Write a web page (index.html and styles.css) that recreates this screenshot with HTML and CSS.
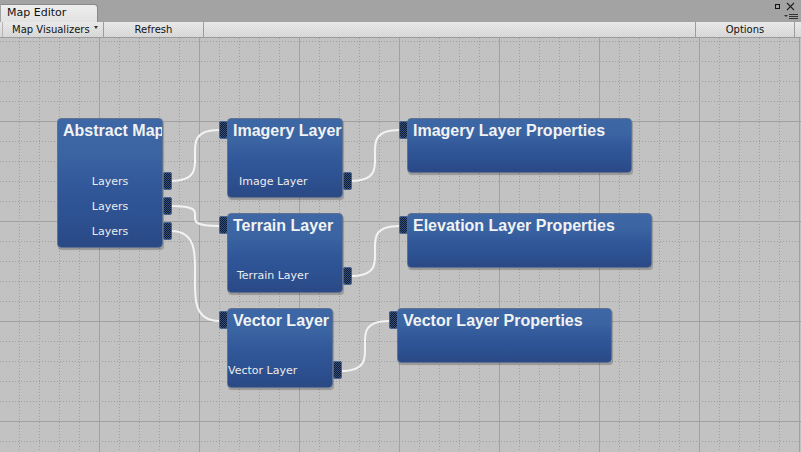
FILE: index.html
```html
<!DOCTYPE html>
<html lang="en">
<head>
<meta charset="utf-8">
<title>Map Editor</title>
<link rel="stylesheet" href="styles.css">
</head>
<body>
<div class="window">
  <div class="tabbar">
    <div class="tab">Map Editor</div>
    <svg class="win-icons" width="28" height="22" viewBox="0 0 28 22">
      <rect x="2.5" y="4.5" width="4" height="4" fill="none" stroke="#111" stroke-width="1"/>
      <path d="M14 3 L21 10 M21 3 L14 10" stroke="#222" stroke-width="1.1" fill="none"/>
      <path d="M11 15 L15 15 L13 17 Z" fill="#333"/>
      <path d="M16 14.5 H25 M16 16.5 H25 M16 18.5 H25" stroke="#333" stroke-width="1"/>
    </svg>
  </div>
  <div class="toolbar">
    <div class="tb-btn tb-drop">Map Visualizers<span class="caret"></span></div>
    <div class="tb-btn tb-refresh">Refresh</div>
    <div class="tb-spacer"></div>
    <div class="tb-btn tb-options">Options</div>
  </div>
  <div class="canvas">
    <svg class="wires" width="801" height="414" viewBox="0 0 801 414">
      <path d="M171 143 C221 143 169 92 219 92"/>
      <path d="M171 168 C221 168 169 188 219 188"/>
      <path d="M171 193 C221 193 169 283 219 283"/>
      <path d="M351 143 C401 143 349 92 399 92"/>
      <path d="M351 238 C401 238 349 188 399 188"/>
      <path d="M341 333 C391 333 339 283 389 283"/>
    </svg>

    <div class="node n-abstract">
      <div class="node-title">Abstract Map</div>
      <div class="node-fields fields-center">
        <div class="field">Layers</div>
        <div class="field">Layers</div>
        <div class="field">Layers</div>
      </div>
      <span class="port out p1"></span>
      <span class="port out p2"></span>
      <span class="port out p3"></span>
    </div>

    <div class="node n-imagery">
      <div class="node-title">Imagery Layer</div>
      <div class="node-fields fields-imagery"><div class="field">Image Layer</div></div>
      <span class="port in"></span>
      <span class="port out p1"></span>
    </div>

    <div class="node n-terrain">
      <div class="node-title">Terrain Layer</div>
      <div class="node-fields fields-terrain"><div class="field">Terrain Layer</div></div>
      <span class="port in"></span>
      <span class="port out p1"></span>
    </div>

    <div class="node n-vector">
      <div class="node-title">Vector Layer</div>
      <div class="node-fields fields-vector"><div class="field">Vector Layer</div></div>
      <span class="port in"></span>
      <span class="port out p1v"></span>
    </div>

    <div class="node prop n-imgprops">
      <div class="node-title">Imagery Layer Properties</div>
      <span class="port in"></span>
    </div>

    <div class="node prop n-elevprops">
      <div class="node-title">Elevation Layer Properties</div>
      <span class="port in"></span>
    </div>

    <div class="node prop n-vecprops">
      <div class="node-title">Vector Layer Properties</div>
      <span class="port in"></span>
    </div>
  </div>
</div>
</body>
</html>
```

FILE: styles.css
```css
* { box-sizing: border-box; }
html, body { margin: 0; padding: 0; }
body {
  font-family: "DejaVu Sans", Verdana, sans-serif;
  background: #c2c2c2;
}
.window {
  width: 801px;
  height: 452px;
  display: flex;
  flex-direction: column;
  overflow: hidden;
  background: #c2c2c2;
}

/* ---------- tab bar ---------- */
.tabbar {
  flex: none;
  height: 22px;
  background: #a3a3a3;
  display: flex;
  align-items: flex-end;
}
.tab {
  height: 18px;
  width: 98px;
  padding-left: 6px;
  background: linear-gradient(#eeeeee, #e2e2e2);
  border: 1px solid #8a8a8a;
  border-bottom: none;
  border-left-color: #a3a3a3;
  border-radius: 0 4px 0 0;
  font-size: 11px;
  line-height: 16px;
  color: #111;
}
.win-icons {
  margin-left: auto;
  align-self: flex-start;
  flex: none;
}

/* ---------- toolbar ---------- */
.toolbar {
  flex: none;
  height: 16px;
  display: flex;
  background:
    repeating-conic-gradient(rgba(0,0,0,0.04) 0 25%, rgba(255,255,255,0.05) 0 50%) 0 0 / 2px 2px,
    linear-gradient(#ededed, #dadada);
  border-bottom: 1px solid #9c9c9c;
  font-size: 10px;
  color: #111;
}
.tb-btn {
  height: 100%;
  display: flex;
  align-items: center;
  border-right: 1px solid #9c9c9c;
  white-space: nowrap;
  padding-bottom: 1px;
}
.tb-drop {
  width: 102px;
  margin-left: 2px;
  padding-left: 9px;
  border-left: 1px solid #b5b5b5;
}
.caret {
  display: inline-block;
  margin-left: 4px;
  margin-top: -3px;
  border-left: 2.5px solid transparent;
  border-right: 2.5px solid transparent;
  border-top: 3px solid #333;
}
.tb-refresh {
  width: 100px;
  justify-content: center;
}
.tb-spacer { flex: 1; border-right: 1px solid #9c9c9c; }
.tb-options {
  width: 99px;
  justify-content: center;
  margin-right: 6px;
}

/* ---------- canvas ---------- */
.canvas {
  flex: 1;
  position: relative;
  background-color: #c2c2c2;
  background-image:
    linear-gradient(90deg, #a1a1a1 1px, transparent 1px),
    linear-gradient(#a1a1a1 1px, transparent 1px),
    conic-gradient(at 1px 1px, transparent 75%, #9e9e9e 0),
    conic-gradient(at 1px 1px, transparent 75%, #9e9e9e 0);
  background-size: 100px 100%, 100% 100px, 20px 3px, 3px 20px;
  background-position: 99px 0, 0 83px, 19px 0, 0 3px;
}
.wires {
  position: absolute;
  left: 0;
  top: 0;
  pointer-events: none;
}
.wires path {
  fill: none;
  stroke: #f3f3f3;
  stroke-width: 2;
}

/* ---------- nodes ---------- */
.node {
  position: absolute;
  border-radius: 4px;
  border: 1px solid #60728f;
  background: linear-gradient(180deg, #3d67a5 0%, #3b64a2 28%, #31589a 52%, #2d5191 76%, #2a4985 100%);
  box-shadow: 1px 2px 1px rgba(0, 0, 0, 0.22);
  color: #f2f2f2;
}
.node-title {
  font: bold 16px/20px "Liberation Sans", Arial, sans-serif;
  padding: 2px 0 0 5px;
  white-space: nowrap;
  overflow: hidden;
}
.node-fields {
  display: flex;
  flex-direction: column;
  gap: 11px;
  margin-top: 34px;
  font-size: 11px;
  line-height: 14px;
  color: #ececec;
  white-space: nowrap;
}
.fields-center { text-align: center; }
.fields-imagery { padding-left: 11px; }
.fields-terrain { padding-left: 9px; margin-top: 33px; }
.fields-vector { padding-left: 0; margin-top: 33px; }

.n-abstract { left: 57px; top: 80px; width: 106px; height: 130px; }
.n-imagery  { left: 227px; top: 80px; width: 116px; height: 80px; }
.n-terrain  { left: 227px; top: 175px; width: 116px; height: 80px; }
.n-vector   { left: 227px; top: 270px; width: 106px; height: 80px; }
.n-imgprops { left: 407px; top: 80px; width: 225px; height: 55px; }
.n-elevprops{ left: 407px; top: 175px; width: 245px; height: 55px; }
.n-vecprops { left: 397px; top: 270px; width: 215px; height: 55px; }

/* ---------- ports ---------- */
.port {
  position: absolute;
  width: 9px;
  height: 18px;
  border-radius: 3px;
  background: repeating-conic-gradient(#101a30 0 25%, #34507e 0 50%) 0 0 / 2px 2px;
  box-shadow: inset 0 0 0 1px #4a6796;
}
.port.in { left: -9px; top: 2px; }
.port.out { right: -10px; }
.port.p1 { top: 53px; }
.port.p2 { top: 78px; }
.port.p3 { top: 103px; }
.port.p1v { top: 52px; }
```
